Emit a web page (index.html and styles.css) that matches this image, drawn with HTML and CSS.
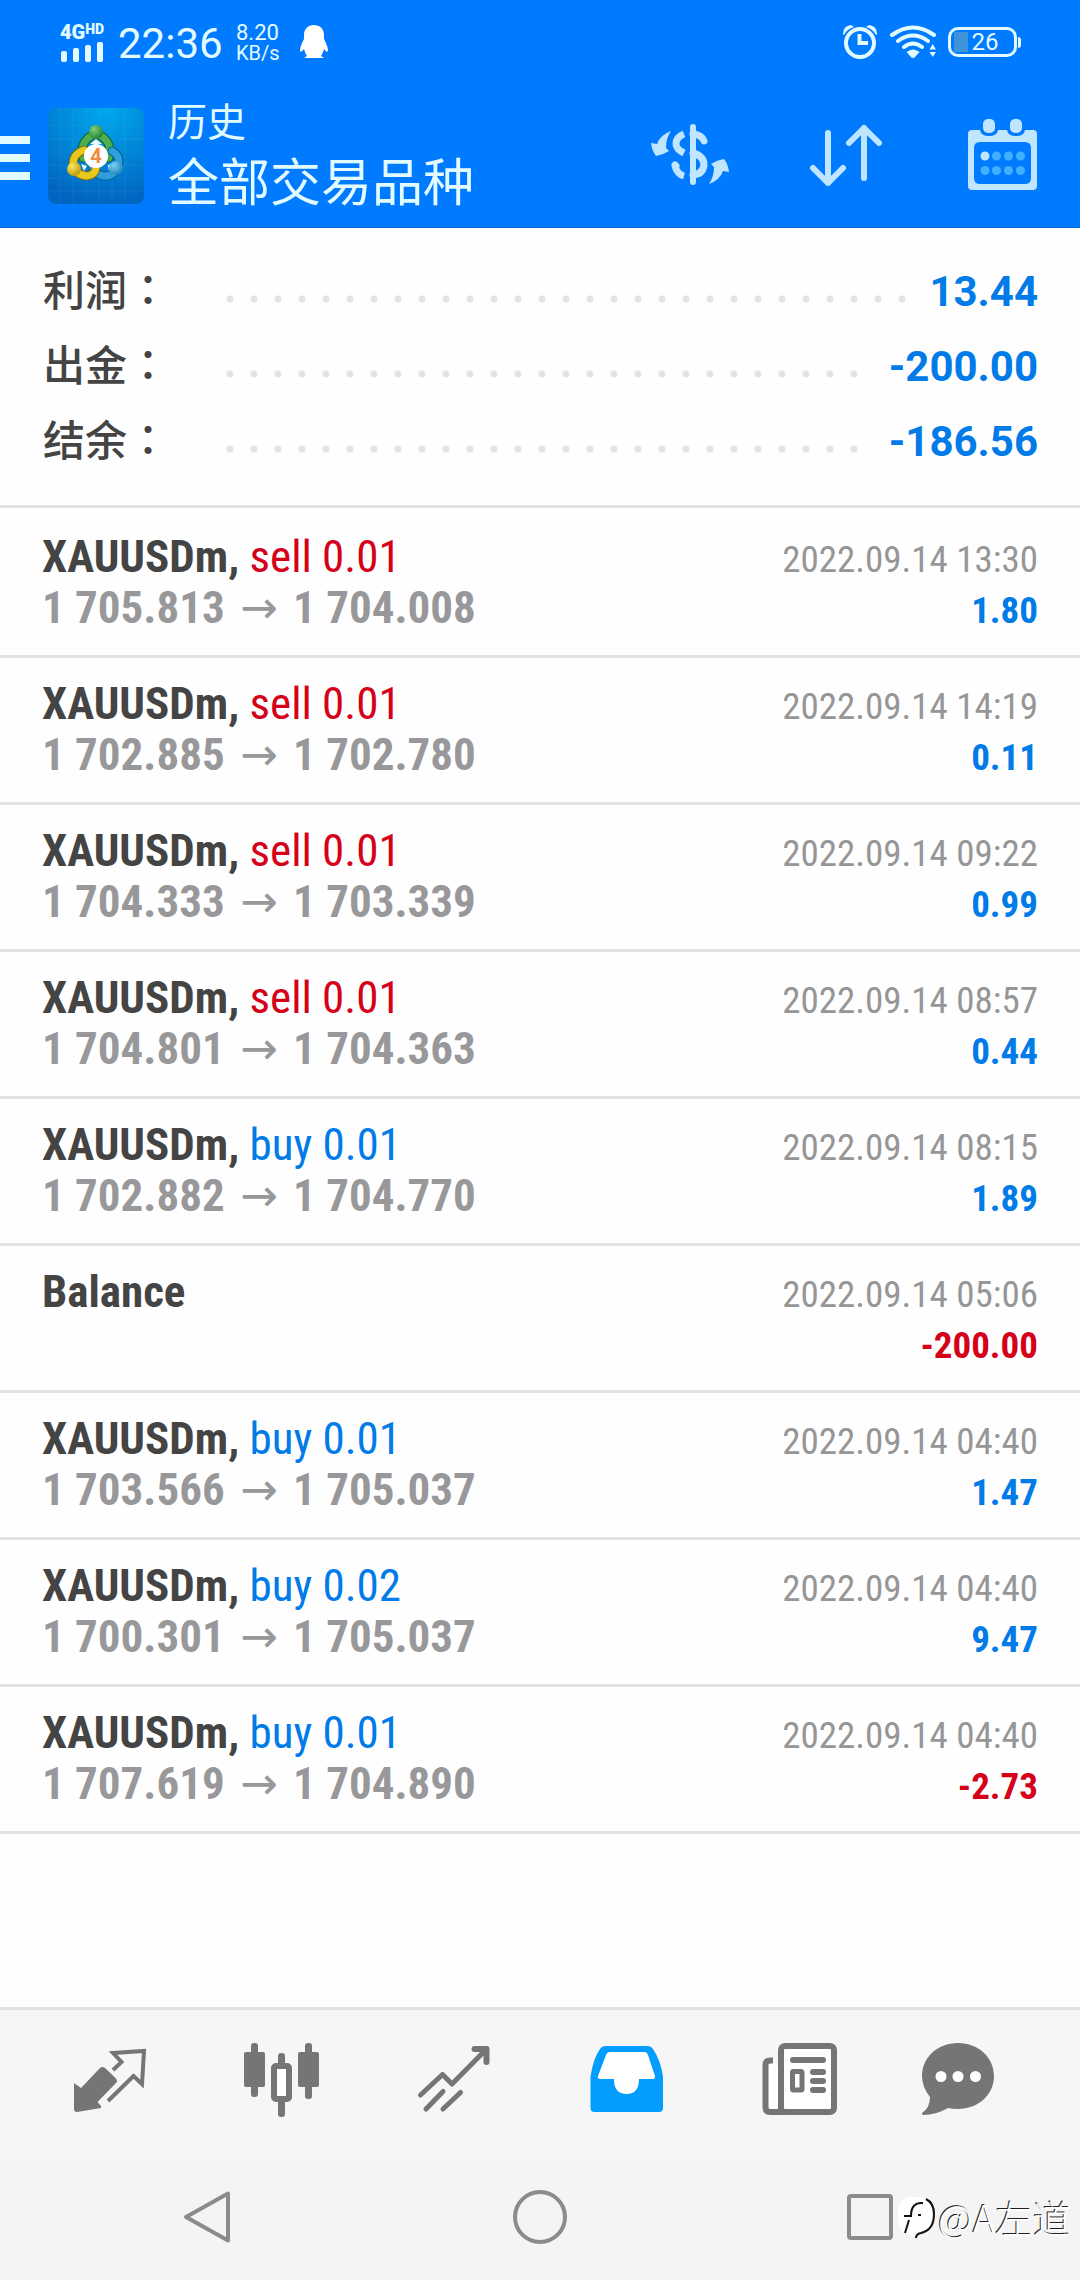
FILE: index.html
```html
<!DOCTYPE html>
<html lang="zh-CN">
<head>
<meta charset="utf-8">
<meta name="viewport" content="width=device-width, initial-scale=1">
<title>历史</title>
<link rel="stylesheet" href="styles.css">
</head>
<body>
<div class="page">
  <header class="header">
    <div class="status">
      <div class="signal">
        <div class="network">4G<sup>HD</sup></div>
        <svg width="44" height="20" viewBox="0 0 44 20" fill="currentColor" aria-hidden="true"><rect x="1" y="9" width="6" height="11" rx="2"/><rect x="13" y="6" width="6" height="14" rx="2"/><rect x="25" y="3" width="6" height="17" rx="2"/><rect x="37" y="0" width="6" height="20" rx="2"/></svg>
      </div>
      <time class="clock">22:36</time>
      <div class="speed"><span>8.20</span><span>KB/s</span></div>
      <svg class="penguin" width="28" height="34" viewBox="0 0 28 34" fill="#fff" aria-hidden="true"><path d="M14 0C20 0 24 4 24 10V14C26 18 28 22 28 26Q27 28 24 24Q23 28 21 31L24 33H4L7 31Q5 28 4 24Q1 28 0 26C0 22 2 18 4 14V10C4 4 8 0 14 0Z"/></svg>
      <div class="status-right">
        <svg width="36" height="36" viewBox="0 0 36 36" fill="none" stroke="currentColor" aria-hidden="true"><circle cx="18" cy="19" r="14" stroke-width="4"/><path d="M17.500 10V19H26" stroke-width="4"/><path d="M1 10Q1 2 9 1L12 3Q5 5 2 11ZM35 10Q35 2 27 1L24 3Q31 5 34 11Z" fill="currentColor" stroke="none"/></svg>
        <svg width="48" height="36" viewBox="0 0 48 36" fill="none" stroke="currentColor" stroke-width="4" stroke-linecap="round" aria-hidden="true"><path d="M3 11Q24-4 45 11M9 17Q24 6 39 17M15 23Q24 16 33 23"/><path d="M17.500 28Q24 23 30.500 28L26 33Q24 35 22 33ZM40.500 25.500H47L43.700 20ZM40.500 28H47L43.700 33Z" fill="currentColor" stroke="none"/></svg>
        <div class="battery">26</div>
      </div>
    </div>
    <div class="toolbar">
      <button class="menu" aria-label="Menu"><span></span><span></span><span></span></button>
      <svg class="logo" width="96" height="96" viewBox="0 0 96 96" role="img" aria-label="MetaTrader 4">
        <defs>
          <radialGradient id="sky" cx=".6" cy="0" r="1"><stop offset="0" stop-color="#00a9ef"/><stop offset=".5" stop-color="#0088d8"/><stop offset="1" stop-color="#0065c0"/></radialGradient>
          <radialGradient id="gr" cx=".35" cy=".3" r=".8"><stop offset="0" stop-color="#83cf78"/><stop offset="1" stop-color="#187b2c"/></radialGradient>
          <radialGradient id="ye" cx=".35" cy=".3" r=".8"><stop offset="0" stop-color="#ffe965"/><stop offset="1" stop-color="#b99100"/></radialGradient>
          <radialGradient id="bl" cx=".35" cy=".3" r=".8"><stop offset="0" stop-color="#7bd0f5"/><stop offset="1" stop-color="#147bb8"/></radialGradient>
        </defs>
        <rect width="96" height="96" rx="8" fill="url(#sky)"/>
        <path d="M12 0V96M25 0V96M38 0V96M51 0V96M64 0V96M77 0V96M0 18H96M0 31H96M0 44H96M0 57H96M0 70H96M0 83H96" stroke="#fff" stroke-opacity=".06"/>
        <g fill="none" stroke-linecap="round">
          <path d="M35 50Q32 38 39 31Q48 22 57 31Q64 38 61 50" stroke="#12602a" stroke-width="9"/>
          <path d="M35 50Q32 38 39 31Q48 22 57 31Q64 38 61 50" stroke="#4caf50" stroke-width="7"/>
          <path d="M64 43Q73 48 70 58Q66 69 55 68Q47 66 44 58" stroke="#075a92" stroke-width="9"/>
          <path d="M64 43Q73 48 70 58Q66 69 55 68Q47 66 44 58" stroke="#2f9fdc" stroke-width="7"/>
          <path d="M36 42Q25 46 25 56Q27 67 39 68Q47 67 48 60" stroke="#7c6a10" stroke-width="9"/>
          <path d="M36 42Q25 46 25 56Q27 67 39 68Q47 67 48 60" stroke="#e8c81c" stroke-width="7"/>
        </g>
        <path d="M42 36L48 31L54 36ZM33 56L36 63L39 58ZM60 57L61 63L65 56Z" fill="#eef8f0"/>
        <circle cx="48" cy="24" r="7" fill="url(#gr)"/><circle cx="26" cy="61" r="7" fill="url(#ye)"/><circle cx="68" cy="60" r="7" fill="url(#bl)"/>
        <circle cx="48" cy="48" r="12" fill="#fff"/>
        <text x="48" y="55" text-anchor="middle" class="logo-digit">4</text>
      </svg>
      <div class="titles"><h1>历史</h1><p>全部交易品种</p></div>
      <div class="actions">
        <button aria-label="Currency"><svg width="96" height="96" viewBox="0 0 96 96"><g fill="currentColor"><path d="M29 23Q18 27 15 36L9 35Q10 43 14 48Q21 47 27 43L24 40Q24 30 29 23Z"/><path d="M67 76Q78 72 81 63L87 64Q86 56 82 51Q75 52 69 56L72 59Q72 69 67 76Z"/></g><g fill="none" stroke="currentColor" stroke-width="7"><path d="M42 26Q34 29 34 36Q34 41 42 45M42 68Q35 66 33 58"/><path d="M51 19V74" stroke-width="6" stroke-linecap="round"/><path d="M51 26Q60 27 62 33" stroke-linecap="round"/><path d="M51 45Q62 48 62 57Q61 66 51 67M33 57L34 58" stroke-linecap="round"/></g></svg></button>
        <button aria-label="Sort"><svg width="96" height="96" viewBox="0 0 96 96" fill="none" stroke="currentColor" stroke-width="6" stroke-linecap="round" stroke-linejoin="round"><path d="M30 25V75M15 60L30 75L45 60M66 70V20M51 35L66 20L81 35"/></svg></button>
        <button aria-label="Calendar"><svg width="96" height="96" viewBox="0 0 96 96"><path fill="currentColor" fill-rule="evenodd" d="M18 22H26Q27 28 35 28Q43 28 44 22H53Q54 28 62 28Q70 28 71 22H79Q83 22 83 26V78Q83 82 79 82H18Q14 82 14 78V26Q14 22 18 22ZM26 34Q20 34 20 40V70Q20 76 26 76H71Q77 76 77 70V40Q77 34 71 34Z"/><g fill="currentColor"><rect x="29" y="11" width="12" height="14" rx="5"/><rect x="56" y="11" width="12" height="14" rx="5"/><circle cx="31" cy="48" r="4.500"/></g><g fill="#40b0ff"><circle cx="42.500" cy="48" r="4.500"/><circle cx="54.500" cy="48" r="4.500"/><circle cx="66.500" cy="48" r="4.500"/><circle cx="31" cy="62.500" r="4.500"/><circle cx="42.500" cy="62.500" r="4.500"/><circle cx="54.500" cy="62.500" r="4.500"/><circle cx="66.500" cy="62.500" r="4.500"/></g></svg></button>
      </div>
    </div>
  </header>

  <main>
    <dl class="summary">
      <div><dt>利润<span lang="zh-TW">：</span></dt><dd>13.44</dd></div>
      <div><dt>出金<span lang="zh-TW">：</span></dt><dd>-200.00</dd></div>
      <div><dt>结余<span lang="zh-TW">：</span></dt><dd>-186.56</dd></div>
    </dl>
    <ul class="deals">
      <li><div class="line"><b>XAUUSDm, <span class="sell">sell 0.01</span></b><time>2022.09.14 13:30</time></div><div class="line"><span class="price">1 705.813 <i>→</i> 1 704.008</span><strong>1.80</strong></div></li>
      <li><div class="line"><b>XAUUSDm, <span class="sell">sell 0.01</span></b><time>2022.09.14 14:19</time></div><div class="line"><span class="price">1 702.885 <i>→</i> 1 702.780</span><strong>0.11</strong></div></li>
      <li><div class="line"><b>XAUUSDm, <span class="sell">sell 0.01</span></b><time>2022.09.14 09:22</time></div><div class="line"><span class="price">1 704.333 <i>→</i> 1 703.339</span><strong>0.99</strong></div></li>
      <li><div class="line"><b>XAUUSDm, <span class="sell">sell 0.01</span></b><time>2022.09.14 08:57</time></div><div class="line"><span class="price">1 704.801 <i>→</i> 1 704.363</span><strong>0.44</strong></div></li>
      <li><div class="line"><b>XAUUSDm, <span class="buy">buy 0.01</span></b><time>2022.09.14 08:15</time></div><div class="line"><span class="price">1 702.882 <i>→</i> 1 704.770</span><strong>1.89</strong></div></li>
      <li><div class="line"><b>Balance</b><time>2022.09.14 05:06</time></div><div class="line"><span class="price">&nbsp;</span><strong class="loss">-200.00</strong></div></li>
      <li><div class="line"><b>XAUUSDm, <span class="buy">buy 0.01</span></b><time>2022.09.14 04:40</time></div><div class="line"><span class="price">1 703.566 <i>→</i> 1 705.037</span><strong>1.47</strong></div></li>
      <li><div class="line"><b>XAUUSDm, <span class="buy">buy 0.02</span></b><time>2022.09.14 04:40</time></div><div class="line"><span class="price">1 700.301 <i>→</i> 1 705.037</span><strong>9.47</strong></div></li>
      <li><div class="line"><b>XAUUSDm, <span class="buy">buy 0.01</span></b><time>2022.09.14 04:40</time></div><div class="line"><span class="price">1 707.619 <i>→</i> 1 704.890</span><strong class="loss">-2.73</strong></div></li>
    </ul>
  </main>

  <nav class="tabs">
    <button aria-label="Quotes"><svg width="96" height="96" viewBox="0 0 96 96"><path fill="currentColor" d="M12 52L19 57L38 37Q40.500 35 43 37L54 47.500Q56 50 54 52L35.500 71L39 75V77L15 81Q12 81 12 78Z"/><path d="M51 39L59.500 31L51 22L82 20L80 53L71.500 45L46 70" fill="none" stroke="currentColor" stroke-width="4"/></svg></button>
    <button aria-label="Charts"><svg width="96" height="96" viewBox="0 0 96 96" fill="currentColor"><rect x="10" y="21" width="21" height="35" rx="2"/><rect x="17" y="12" width="7" height="54" rx="3"/><rect x="64" y="21" width="21" height="35" rx="2"/><rect x="71" y="12" width="7" height="56" rx="3"/><rect x="44" y="22" width="7" height="16" rx="3"/><rect x="44" y="68" width="7" height="18" rx="3"/><rect x="40" y="35" width="15" height="33" rx="2" fill="#fff" stroke="currentColor" stroke-width="6"/></svg></button>
    <button aria-label="Trade"><svg width="96" height="96" viewBox="0 0 96 96" fill="none" stroke="currentColor" stroke-width="5" stroke-linecap="round" stroke-linejoin="round"><path d="M14.500 64L36.500 43.500L46 53L80 18.500M20 78L37 60.500M37 78L54.500 61.500"/><path d="M68.500 18H80.500V31" stroke-width="6"/></svg></button>
    <button class="active" aria-label="History"><svg width="96" height="96" viewBox="0 0 96 96"><path fill="currentColor" d="M12.500 46Q15 28 22 18Q24 15 28 15H69Q73 15 75 18Q83 30 85 46V77Q85 81 81 81H16.500Q12.500 81 12.500 77Z"/><path fill="#fff" d="M32 21H66Q69 21 70 24L77 45Q77 48 75 48H61Q61 63 48.500 63Q36 63 36 48H22Q19 48 20 45L28 24Q29 21 32 21Z"/></svg></button>
    <button aria-label="News"><svg width="96" height="96" viewBox="0 0 96 96" fill="none" stroke="currentColor"><path d="M23 29.500H20Q15.500 29.500 15.500 34V76Q15.500 81 20 81H31V40" fill="#fff" stroke-width="6"/><rect x="31" y="15" width="53" height="66" rx="4" fill="#fff" stroke-width="6"/><g fill="currentColor" stroke="none"><rect x="40" y="26" width="36" height="6" rx="3"/><rect x="60" y="38" width="16" height="6" rx="3"/><rect x="60" y="47" width="16" height="6" rx="3"/><rect x="60" y="56" width="16" height="6" rx="3"/></g><rect x="42.500" y="40.500" width="9.500" height="18.500" rx="1" fill="#fff" stroke-width="5"/></svg></button>
    <button aria-label="Messages"><svg width="96" height="96" viewBox="0 0 96 96"><path fill="currentColor" d="M36 12C57 12 72 27 72 45C72 64 56 78 36 78Q30 78 26 77Q14 84 1 84Q0 84 0 82Q8 77 8 66Q0 56 0 45C0 27 15 12 36 12Z"/><g fill="#fff"><circle cx="19" cy="45.500" r="5.500"/><circle cx="36" cy="45.500" r="5.500"/><circle cx="53.500" cy="45.500" r="5.500"/></g></svg></button>
  </nav>
  <nav class="system">
    <button aria-label="Back"><svg width="60" height="60" viewBox="0 0 60 60"><path d="M50 6.500V53.500L8 30Z"/></svg></button>
    <button aria-label="Home"><svg width="60" height="60" viewBox="0 0 60 60"><circle cx="30" cy="30" r="25"/></svg></button>
    <button aria-label="Recents"><svg width="60" height="60" viewBox="0 0 60 60"><rect x="7" y="9" width="42" height="42" rx="2"/></svg></button>
    <div class="watermark"><svg width="42" height="46" viewBox="0 0 42 46" aria-hidden="true"><path d="M14 3H25Q37 5 36 20Q37 33 25 39L17 43Q14 40 10 40Q2 36 2 22Q1 5 14 3Z" fill="#fff"/><path d="M30 5Q38 9 38 20Q38 36 25 39Q20 40 20 44M27 9Q15 8 15 22H8M13 26L9 39M22 21H25" fill="none" stroke="#111" stroke-width="2"/></svg><span>@A左道</span></div>
  </nav>
</div>
</body>
</html>
```
FILE: styles.css
```css
* { box-sizing: border-box; }
body, h1, p, dl, dd, ul { margin: 0; padding: 0; }
body { background: #fefefe; font-family: Roboto, "Noto Sans CJK SC", sans-serif; color: #444; }
button { border: 0; padding: 0; background: none; color: inherit; display: flex; }
svg { display: block; flex: none; }

.page { min-height: 100vh; display: flex; flex-direction: column; }

/* header */
.header { background: #007bff; color: #e2fbff; border-bottom: 1px solid #0068d8; }
.status { height: 84px; padding: 0 63px 0 60px; display: flex; align-items: center; }
.signal { width: 58px; height: 40px; display: flex; flex-direction: column; justify-content: space-between; }
.network { display: flex; font-size: 20px; line-height: 20px; height: 16px; font-weight: 900; }
.network sup { font-size: 14px; line-height: 14px; }
.clock { width: 118px; font-size: 42px; line-height: 48px; padding-top: 4px; }
.speed { width: 64px; display: flex; flex-direction: column; font-size: 22px; line-height: 20px; padding-top: 2px; }
.speed span + span { font-size: 20px; }
.status-right { margin-left: auto; display: flex; align-items: center; gap: 11px; }
.battery { position: relative; width: 69px; height: 30px; border: 3px solid; border-radius: 10px; font-size: 24px; line-height: 24px; text-align: center; padding-left: 5px; background: linear-gradient(#3f93d8, #3f93d8) 3px 2px / 14px 20px no-repeat; }
.battery::after { content: ""; position: absolute; right: -7px; top: 7px; width: 3px; height: 11px; background: currentColor; border-radius: 0 3px 3px 0; }

.toolbar { height: 143px; display: flex; align-items: center; padding-right: 30px; }
.menu { width: 30px; margin-right: 18px; padding-top: 4px; flex-direction: column; gap: 10px; }
.menu span { height: 8px; width: 100%; background: currentColor; }
.logo-digit { font: 700 20px Roboto, sans-serif; fill: #f08a3c; }
.titles { margin-left: 24px; }
.titles h1 { font-size: 39px; line-height: 56px; font-weight: 400; }
.titles p { font-size: 51px; line-height: 66px; white-space: nowrap; }
.actions { margin-left: auto; display: flex; gap: 60px; color: #bfe5ff; }

/* totals */
.summary { padding: 26px 42px 26px 43px; border-bottom: 3px solid #e3e3e3; font-size: 42px; line-height: 75px; }
.summary div { display: flex; height: 75px; }
.summary dt { width: 175px; font-weight: 500; font-family: "Noto Sans CJK SC", sans-serif; line-height: 68px; }
.summary dd { flex: 1; display: flex; justify-content: flex-end; font-weight: 700; color: #007be8; }
.summary dd::before { content: ""; flex: 1; margin-right: 16px; background: radial-gradient(circle at 12px 45px, #e3e3e3 3px, transparent 4px) 0 0 / 24px 75px repeat-x; }

/* deals */
.deals { list-style: none; padding-top: 3px; font-family: "Roboto Condensed", Roboto, sans-serif; }
.deals li { padding: 20px 42px 22px; border-bottom: 3px solid #e3e3e3; }
.line { height: 51px; display: flex; justify-content: space-between; align-items: baseline; line-height: 51px; white-space: nowrap; }
.line b, .price { font-size: 45px; font-weight: 700; }
.line b span { font-weight: 400; }
.price { color: #98989b; }
.price i { margin: 0 5px; font-style: normal; font-family: "DejaVu Sans", sans-serif; font-weight: 400; line-height: 1; }
.line time { font-size: 37px; color: #969696; }
.line strong { font-size: 37px; font-weight: 700; color: #007be8; }
.sell, .line .loss { color: #d50019; }
.buy { color: #007be8; }

/* bottom tabs */
.tabs { margin-top: auto; height: 155px; padding: 21px 24px 0; border-top: 3px solid #e1e1e1; background: #f6f6f6; color: #757575; display: grid; grid-template-columns: repeat(6, 1fr); }
.tabs button, .system button { justify-content: center; align-items: flex-start; }
.tabs .active { color: #039dff; }
.system { position: relative; height: 118px; padding: 0 42px 8px; background: #f4f4f4; display: grid; grid-template-columns: repeat(3, 1fr); align-items: center; }
.system button svg { fill: none; stroke: #8b8b8b; stroke-width: 4; stroke-linejoin: round; }
.watermark { position: absolute; right: 9px; bottom: 38px; display: flex; align-items: center; font: 300 38px/50px "Noto Sans CJK SC", sans-serif; color: #fff; text-shadow: -1px -1px 0 #222; }
```
